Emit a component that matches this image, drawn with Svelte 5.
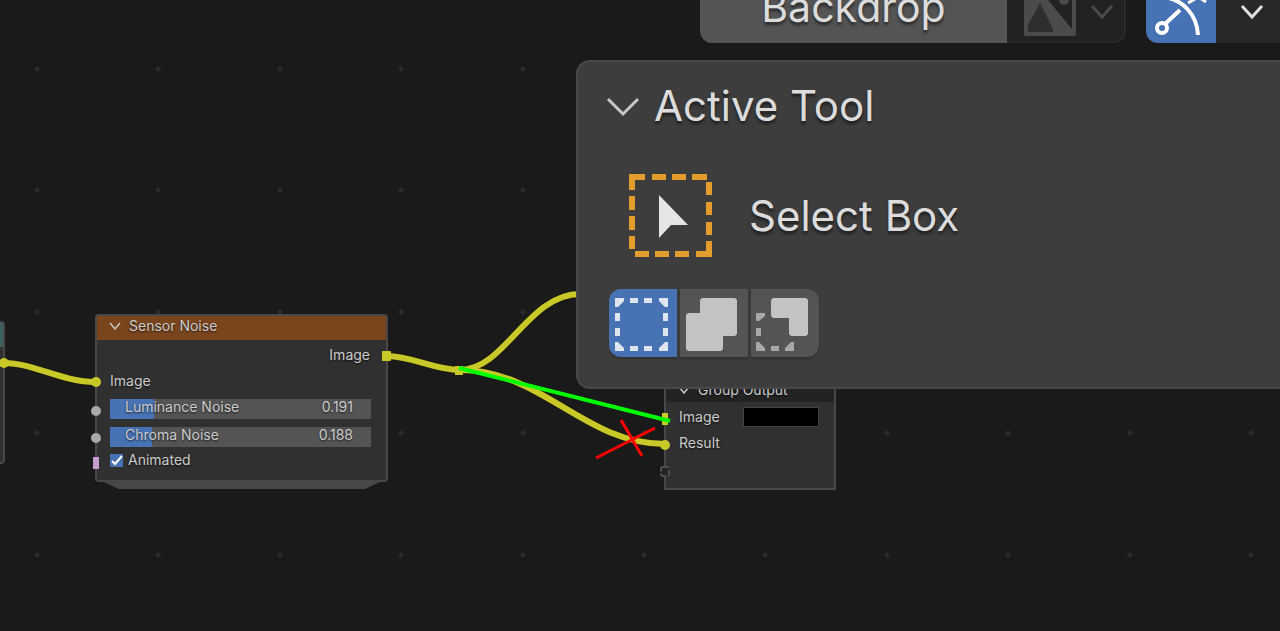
<script lang="ts">
  // Background grid of the node editor
  const GRID_COLUMNS = 24;
  const GRID_ROWS = 12;
  const dots = Array.from({ length: GRID_COLUMNS * GRID_ROWS }, (_, i) => ({
    x: 37 + Math.round((i % GRID_COLUMNS) * 121.4),
    y: 69 + Math.round(Math.floor(i / GRID_COLUMNS) * 121.4),
  }));

  const sliders = [
    { name: 'Luminance Noise', value: '0.191', fill: 17 },
    { name: 'Chroma Noise', value: '0.188', fill: 16 },
  ];

  let mode = $state('set');
  let backdrop = $state(true);
  let animated = $state(true);
</script>

<main class="editor">
  <div class="canvas">
    <svg class="layer" aria-hidden="true">
      {#each dots as dot}
        <path d="M{dot.x - 3} {dot.y} l3 -3 l3 3 l-3 3 Z" fill="#2d2d2d" />
      {/each}
    </svg>

    <section class="node previous" aria-label="Previous node">
      <div class="node-header teal"></div>
    </section>

    <div class="stack"></div>
    <section class="node sensor">
      <header class="node-header orange">
        <svg width="12" height="8" viewBox="0 0 12 8" aria-hidden="true">
          <path d="M1 1 L6 7 L11 1" fill="none" stroke="#ccc" stroke-width="1.4" />
        </svg>
        <span>Sensor Noise</span>
      </header>
      <div class="sensor-body">
        <div class="row output">Image</div>
        <div class="row">Image</div>
        {#each sliders as slider}
          <label class="slider">
            <input
              type="range"
              min="0"
              max="1"
              step="0.001"
              value={slider.value}
              style="--fill: {slider.fill}%"
            />
            <span class="slider-text"><span>{slider.name}</span><span>{slider.value}</span></span>
          </label>
        {/each}
        <label class="check">
          <input type="checkbox" bind:checked={animated} />
          <svg width="13" height="13" viewBox="0 0 13 13" aria-hidden="true">
            <path d="M2 7 L5 10 L12 2" fill="none" stroke="#fff" stroke-width="2" />
          </svg>
          <span>Animated</span>
        </label>
      </div>
    </section>

    <section class="node group-output">
      <header class="node-header dark">
        <svg width="12" height="8" viewBox="0 0 12 8" aria-hidden="true">
          <path d="M1 1 L6 7 L11 1" fill="none" stroke="#ccc" stroke-width="1.4" />
        </svg>
        <span>Group Output</span>
      </header>
      <div class="group-body">
        <label class="row swatch"><span>Image</span><input type="color" value="#000000" /></label>
        <div class="row">Result</div>
      </div>
    </section>

    <!-- Links, sockets and annotations -->
    <svg class="layer links" aria-hidden="true">
      <g fill="none" stroke="#1a1a10" stroke-width="8">
        <path d="M4 363 C34 363 62 382 95 382" />
        <path d="M387 356 C412 356 434 370 460 370" />
        <path d="M460 370 C505 370 528 294 580 294" />
        <path d="M460 370 C542 370 584 444 665 444" />
      </g>
      <g fill="none" stroke="#c9c829" stroke-width="6">
        <path d="M4 363 C34 363 62 382 95 382" />
        <path d="M387 356 C412 356 434 370 460 370" />
        <path d="M460 370 C505 370 528 294 580 294" />
        <path d="M460 370 C542 370 584 444 665 444" />
      </g>
      <g fill="#c9c829">
        <circle cx="4" cy="363" r="5" />
        <circle cx="96" cy="382" r="5" />
        <rect x="382" y="351" width="9" height="10" rx="1" />
        <rect x="455" y="366" width="8" height="9" />
        <rect x="662" y="413" width="6" height="12" />
        <circle cx="665" cy="445" r="5" />
      </g>
      <circle cx="96" cy="411" r="5" fill="#a8a8a8" />
      <circle cx="96" cy="438" r="5" fill="#a8a8a8" />
      <rect x="93" y="457" width="6" height="12" fill="#c69bcf" />
      <rect
        x="661"
        y="467"
        width="8"
        height="9"
        rx="2"
        fill="#242424"
        stroke="#505050"
        stroke-width="2"
        stroke-dasharray="6 2"
      />
      <path d="M459 368 L670 421" stroke="#00ff00" stroke-width="4" />
      <path d="M596 458 L655 428 M621 420 L642 456" stroke="#ff0000" stroke-width="3" />
    </svg>
  </div>

  <header class="toolbar">
    <div class="group">
      <button
        type="button"
        class="tool backdrop"
        aria-pressed={backdrop}
        onclick={() => (backdrop = !backdrop)}>Backdrop</button
      >
      <button type="button" class="tool image" aria-label="Backdrop image">
        <svg width="100" height="60" viewBox="0 0 100 60" aria-hidden="true">
          <rect x="8" y="3" width="52" height="52" rx="2" fill="#4b4b4b" />
          <path d="M22 7 H56 V48 Z" fill="#222" />
          <path d="M12 48 V44 L24 22 L37 48 V51 H12 Z" fill="#2e2e2e" />
          <circle cx="48" cy="19" r="5" fill="#4b4b4b" />
          <path d="M76 25 L86 36 L96 25" fill="none" stroke="#4b4b4b" stroke-width="3" />
        </svg>
      </button>
    </div>
    <div class="group">
      <button type="button" class="tool snap" aria-label="Link curve" aria-pressed="true">
        <svg width="69" height="64" viewBox="0 0 69 64" aria-hidden="true">
          <g fill="none" stroke="#fff" stroke-width="4">
            <circle cx="15" cy="49" r="5" />
            <path d="M19 44 L33 31 M16 18 C36 20 50 36 51 56" />
            <path d="M41 24 L48 20 M53 19 L59 23" stroke-width="3" />
          </g>
        </svg>
      </button>
      <button type="button" class="tool more" aria-label="More options">
        <svg width="24" height="16" viewBox="0 0 24 16" aria-hidden="true">
          <path d="M2 3 L12 14 L22 3" fill="none" stroke="#e0e0e0" stroke-width="3" />
        </svg>
      </button>
    </div>
  </header>

  <aside class="panel">
    <button type="button" class="panel-title" aria-expanded="true">
      <svg width="34" height="22" viewBox="0 0 34 22" aria-hidden="true">
        <path d="M2 4 L17 19 L32 4" fill="none" stroke="#c8c8c8" stroke-width="3" />
      </svg>
      <span>Active Tool</span>
    </button>

    <div class="active-tool">
      <svg width="84" height="84" viewBox="0 0 84 84" aria-hidden="true">
        <path
          d="M0 3 H16 M23 3 H37 M43 3 H57 M63 3 H78 M80 8 V21 M80 28 V41 M80 48 V61 M80 67 V83 M83 80 H67 M60 80 H46 M40 80 H26 M20 80 H6 M3 75 V62 M3 56 V42 M3 36 V22 M3 16 V0"
          fill="none"
          stroke="#e49c2c"
          stroke-width="6"
        />
        <path d="M30 21 L59 51 H42 L30 64 Z" fill="#e6e6e6" />
      </svg>
      <span>Select Box</span>
    </div>

    <div class="modes">
      <button type="button" aria-label="Set" aria-pressed={mode === 'set'} onclick={() => (mode = 'set')}>
        <svg width="68" height="68" viewBox="0 0 68 68" fill="#dfe5f0" aria-hidden="true">
          <path d="M6 9 H15 V12 L9 18 H6 Z M59 9 V18 H56 L50 12 V9 Z M6 62 V53 H9 L15 59 V62 Z M59 62 H50 V59 L56 53 H59 Z" />
          <path d="M21 9 H29 V14 H21 Z M35 9 H43 V14 H35 Z M21 57 H29 V62 H21 Z M35 57 H43 V62 H35 Z" />
          <path d="M6 24 H11 V32 H6 Z M6 39 H11 V47 H6 Z M54 24 H59 V32 H54 Z M54 39 H59 V47 H54 Z" />
        </svg>
      </button>
      <button type="button" aria-label="Extend" aria-pressed={mode === 'extend'} onclick={() => (mode = 'extend')}>
        <svg width="68" height="68" viewBox="0 0 68 68" fill="#c3c3c3" aria-hidden="true">
          <path
            d="M22 9 H55 L57 11 V45 L55 47 H43 V60 L41 62 H8 L6 60 V26 L8 24 H20 V11 Z"
          />
        </svg>
      </button>
      <button type="button" aria-label="Subtract" aria-pressed={mode === 'subtract'} onclick={() => (mode = 'subtract')}>
        <svg width="68" height="68" viewBox="0 0 68 68" fill="#c3c3c3" aria-hidden="true">
          <path d="M22 9 H55 L57 11 V45 L55 47 H40 L38 45 V29 H22 L20 27 V11 Z" />
          <path
            d="M5 24 H14 V27 L8 32 H5 Z M5 39 H10 V47 H5 Z M5 53 H8 L14 59 V62 H5 Z M20 57 H28 V62 H20 Z M43 53 V62 H34 V59 L40 53 Z"
            fill="#a8a8a8"
          />
        </svg>
      </button>
    </div>
  </aside>
</main>

<style>
  :global(body) {
    background: #1a1a1a;
  }

  .editor {
    position: relative;
    height: 100vh;
    overflow: hidden;
    background: #1a1a1a;
    color: #dcdcdc;
    font-family: Inter, 'Noto Sans', sans-serif;
    font-size: 14px;
  }

  button {
    border: 0;
    margin: 0;
    padding: 0;
    color: inherit;
    font: inherit;
    text-shadow: inherit;
  }

  input {
    appearance: none;
    margin: 0;
  }

  svg {
    display: block;
    flex: none;
  }

  /* Node canvas */
  .canvas {
    position: absolute;
    inset: 0;
  }

  .layer {
    position: absolute;
    inset: 0;
    width: 100%;
    height: 100%;
  }

  .links {
    pointer-events: none;
  }

  .node {
    position: absolute;
    box-sizing: border-box;
    border: 2px solid #484848;
    background: #303030;
    color: #cccccc;
    line-height: 20px;
    text-shadow: 0 1px 2px rgba(0, 0, 0, 0.7);
  }

  .node-header {
    display: flex;
    align-items: center;
    gap: 8px;
    height: 24px;
    padding: 0 12px;
    box-sizing: border-box;
  }

  .teal {
    background: #3c6064;
  }

  .orange {
    padding-bottom: 4px;
    background: #7a451d;
  }

  .dark {
    background: #232323;
  }

  .previous {
    left: -100px;
    top: 321px;
    width: 105px;
    height: 143px;
    border-radius: 4px;
  }

  .sensor {
    left: 95px;
    top: 314px;
    width: 293px;
    height: 168px;
    border-radius: 4px;
  }

  .stack {
    position: absolute;
    left: 102px;
    top: 481px;
    width: 280px;
    height: 8px;
    background: #484848;
    clip-path: polygon(0 0, 100% 0, 94% 100%, 6% 100%);
  }

  .sensor-body {
    padding: 5px 15px 0 13px;
  }

  .row {
    height: 20px;
    margin-bottom: 6px;
  }

  .output {
    padding-right: 1px;
    text-align: right;
  }

  .slider {
    display: grid;
    height: 20px;
    margin-top: 8px;
  }

  .slider input,
  .slider-text {
    grid-area: 1 / 1;
  }

  .slider input {
    width: 100%;
    height: 20px;
    background: linear-gradient(to right, #4772b3 var(--fill), #545454 var(--fill));
  }

  .slider input::-webkit-slider-thumb {
    appearance: none;
    width: 0;
  }

  .slider-text {
    display: flex;
    justify-content: space-between;
    padding: 0 18px 0 15px;
    line-height: 16px;
    pointer-events: none;
  }

  .check {
    display: grid;
    grid-template-columns: 13px auto;
    align-items: center;
    column-gap: 5px;
    margin-top: 3px;
  }

  .check input,
  .check svg {
    grid-area: 1 / 1;
  }

  .check input {
    width: 13px;
    height: 13px;
    background: #545454;
  }

  .check input:checked {
    background: #4772b3;
  }

  .check svg {
    pointer-events: none;
  }

  .group-output {
    left: 664px;
    top: 376px;
    width: 172px;
    height: 114px;
  }

  .group-body {
    padding: 5px 15px 0 13px;
  }

  .swatch {
    display: flex;
    justify-content: space-between;
  }

  .swatch input {
    width: 76px;
    height: 20px;
    padding: 0;
    border: 1px solid #444;
    background: #000;
  }

  .swatch input::-webkit-color-swatch-wrapper {
    padding: 0;
  }

  .swatch input::-webkit-color-swatch {
    border: 0;
  }

  /* Toolbar, its upper part runs out of the window */
  .toolbar {
    position: relative;
    display: flex;
    justify-content: flex-end;
    align-items: flex-end;
    gap: 20px;
    height: 43px;
    font-size: 41px;
    line-height: 48px;
    text-shadow: 0 3px 3px rgba(0, 0, 0, 0.5);
  }

  .group {
    display: flex;
  }

  .tool {
    display: flex;
    justify-content: center;
    align-items: center;
    box-sizing: border-box;
    height: 64px;
    background: #222;
  }

  .backdrop {
    width: 307px;
    padding-bottom: 8px;
    border-radius: 12px 0 0 12px;
    background: #545454;
  }

  .image {
    width: 119px;
    border: 2px solid #292929;
    border-left: 0;
    border-radius: 0 12px 12px 0;
  }

  .snap {
    width: 70px;
    border-radius: 12px 0 0 12px;
    background: #4772b3;
  }

  .more {
    width: 64px;
    padding: 0 0 0 8px;
    background: #282828;
  }

  /* Sidebar panel */
  .panel {
    position: relative;
    box-sizing: border-box;
    margin: 17px 0 0 45%;
    padding: 20px 32px 30px 31px;
    border: 2px solid #484848;
    border-right: 0;
    border-radius: 14px 0 0 14px;
    background: #3d3d3d;
    font-size: 42px;
    line-height: 48px;
    text-shadow: 0 3px 3px rgba(0, 0, 0, 0.5);
  }

  .panel-title {
    display: flex;
    align-items: center;
    gap: 14px;
    margin-left: -3px;
    background: none;
  }

  .active-tool {
    display: flex;
    align-items: center;
    gap: 36px;
    margin: 44px 0 31px 20px;
  }

  .modes {
    display: flex;
    gap: 3px;
  }

  .modes button {
    overflow: hidden;
    background: #545454;
    box-shadow: 0 2px 2px rgba(0, 0, 0, 0.2);
  }

  .modes button:first-child {
    border-radius: 12px 0 0 12px;
  }

  .modes button:last-child {
    border-radius: 0 12px 12px 0;
  }

  .modes button[aria-pressed='true'] {
    background: #4772b3;
  }
</style>
